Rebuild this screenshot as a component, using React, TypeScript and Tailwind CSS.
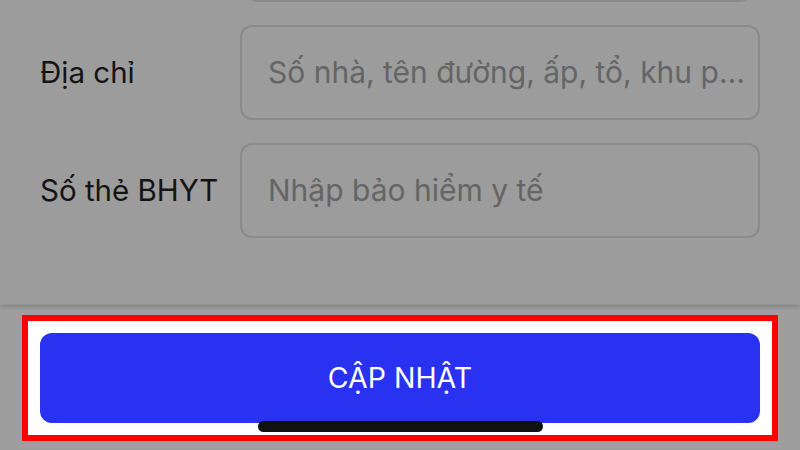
import React from "react";

const font = { fontFamily: "Inter, 'Noto Sans', sans-serif" };

function FieldRow({ label, placeholder }: { label: string; placeholder: string }) {
  return (
    <div className="flex items-center">
      <span className="w-[200px] shrink-0 text-[29.5px] text-[#141414]">{label}</span>
      <div className="flex-1 min-w-0 h-[95px] flex items-center pl-[26px] pr-[4px] rounded-[12px] border-2 border-[#8a8a8a]">
        <span className="truncate text-[30px] text-[#656565]">{placeholder}</span>
      </div>
    </div>
  );
}

export default function App() {
  return (
    <div className="w-[800px] h-[450px] bg-[#9e9e9e] flex flex-col overflow-hidden relative" style={font}>
      {/* Form */}
      <div className="h-[305px] shrink-0 flex flex-col gap-[23px] px-[40px] bg-[#9c9c9c] shadow-[0_2px_4px_rgba(0,0,0,0.15)] border-b border-[#939393]">
        <div className="mt-[-60px] h-[62px] ml-[206px] mr-[8px] rounded-[12px] border-2 border-[#8a8a8a]" />
        <FieldRow label="Địa chỉ" placeholder="Số nhà, tên đường, ấp, tổ, khu phố, thôn" />
        <FieldRow label="Số thẻ BHYT" placeholder="Nhập bảo hiểm y tế" />
      </div>

      {/* Footer */}
      <div className="flex-1 pt-[10px] px-[22px]">
        <div className="relative h-[126px] border-[6px] border-[#ff0000] bg-white p-[12px]">
          <button className="w-full h-full rounded-[12px] bg-[#2832f0] text-white text-[28.5px]">
            CẬP NHẬT
          </button>
          <div className="absolute left-[230px] top-[100px] w-[285px] h-[11px] rounded-full bg-[#111111]" />
        </div>
      </div>
    </div>
  );
}
